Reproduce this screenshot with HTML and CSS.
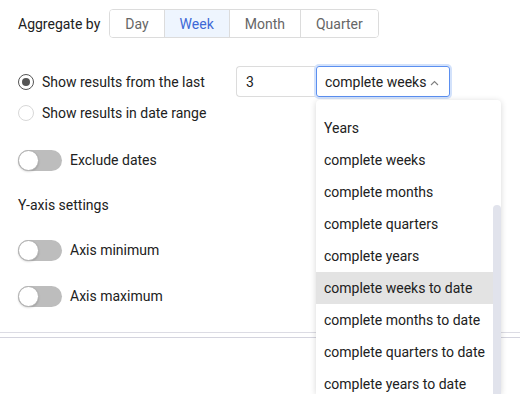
FILE: index.html
```html
<!DOCTYPE html>
<html>
<head>
<meta charset="utf-8">
<link rel="stylesheet" href="styles.css">
</head>
<body>
<div class="content">
  <div class="agg-row">
    <span class="agg-label">Aggregate by</span>
    <div class="btn-group">
      <button class="seg">Day</button>
      <button class="seg active">Week</button>
      <button class="seg">Month</button>
      <button class="seg">Quarter</button>
    </div>
  </div>

  <div class="radio-row first">
    <label class="radio-label">
      <span class="radio checked"></span>
      <span>Show results from the last</span>
    </label>
    <div class="num-input">3</div>
    <div class="select">
      <span>complete weeks</span>
      <svg class="chev" width="9" height="6" viewBox="0 0 9 6"><path d="M1 5 L4.5 1.5 L8 5" fill="none" stroke="#808080" stroke-width="1.1"/></svg>
    </div>
  </div>

  <div class="radio-row second">
    <label class="radio-label">
      <span class="radio"></span>
      <span>Show results in date range</span>
    </label>
  </div>

  <div class="toggle-row t1">
    <span class="toggle"><span class="knob"></span></span>
    <span>Exclude dates</span>
  </div>

  <div class="section-title">Y-axis settings</div>

  <div class="toggle-row t2">
    <span class="toggle"><span class="knob"></span></span>
    <span>Axis minimum</span>
  </div>

  <div class="toggle-row t2">
    <span class="toggle"><span class="knob"></span></span>
    <span>Axis maximum</span>
  </div>
</div>
<div class="footer-lines"></div>

<div class="dropdown">
  <ul class="options">
    <li>Years</li>
    <li>complete weeks</li>
    <li>complete months</li>
    <li>complete quarters</li>
    <li>complete years</li>
    <li class="hover">complete weeks to date</li>
    <li>complete months to date</li>
    <li>complete quarters to date</li>
    <li>complete years to date</li>
  </ul>
  <div class="scrollbar"></div>
</div>
</body>
</html>
```

FILE: styles.css
```css
html, body {
  margin: 0;
  padding: 0;
  background: #ffffff;
  width: 520px;
  height: 394px;
  overflow: hidden;
}
body {
  font-family: Roboto, "Liberation Sans", sans-serif;
  font-size: 14px;
  color: #212121;
  position: relative;
}
.content {
  padding: 9px 0 0 18px;
}
.agg-row {
  display: flex;
  align-items: center;
  height: 29px;
}
.agg-label {
  margin-right: 9px;
}
.btn-group {
  display: flex;
  height: 29px;
  border: 1px solid #dcdcdc;
  border-radius: 4px;
  box-sizing: border-box;
  overflow: hidden;
}
.seg {
  font-family: inherit;
  font-size: 14px;
  color: #666666;
  background: #ffffff;
  border: none;
  border-left: 1px solid #dcdcdc;
  padding: 0 15px;
  margin: 0;
  height: 100%;
}
.seg:first-child {
  border-left: none;
}
.seg.active {
  background: #eef5fe;
  color: #3d68d6;
}
.radio-row {
  display: flex;
  align-items: center;
}
.radio-row.first {
  margin-top: 28px;
  height: 31px;
}
.radio-row.second {
  margin-top: 5px;
  height: 22px;
}
.radio-label {
  display: flex;
  align-items: center;
  width: 218px;
}
.radio {
  width: 16px;
  height: 16px;
  border-radius: 50%;
  box-sizing: border-box;
  border: 1px solid #d8d8d8;
  margin-right: 8px;
  display: flex;
  align-items: center;
  justify-content: center;
}
.radio.checked {
  border: 1.5px solid #555555;
}
.radio.checked::after {
  content: "";
  width: 8px;
  height: 8px;
  border-radius: 50%;
  background: #555555;
}
.num-input {
  width: 80px;
  height: 31px;
  box-sizing: border-box;
  border: 1px solid #dcdcdc;
  border-right: none;
  border-radius: 4px 0 0 4px;
  padding-left: 9px;
  display: flex;
  align-items: center;
}
.select {
  width: 134px;
  height: 31px;
  box-sizing: border-box;
  border: 1px solid #5b8ff0;
  border-radius: 3px;
  box-shadow: 0 0 0 2px #d3e2fb;
  padding-left: 8px;
  display: flex;
  align-items: center;
}
.chev {
  margin-left: 4px;
  margin-top: 2px;
}
.toggle-row {
  display: flex;
  align-items: center;
  height: 22px;
}
.toggle-row.t1 {
  margin-top: 25px;
}
.toggle-row.t2 {
  margin-top: 24px;
}
.toggle {
  position: relative;
  width: 44px;
  height: 21px;
  border-radius: 11px;
  background: #bdbdbd;
  margin-right: 8px;
}
.knob {
  position: absolute;
  left: 0;
  top: 0;
  width: 21px;
  height: 21px;
  box-sizing: border-box;
  border-radius: 50%;
  background: #ffffff;
  border: 1px solid #b0b0b0;
  box-shadow: 0 1px 2px rgba(0,0,0,0.15);
}
.section-title {
  margin-top: 24px;
  height: 20px;
  line-height: 20px;
}
.footer-lines {
  margin-top: 25px;
  height: 4px;
  border-top: 1px solid #dcdce4;
  border-bottom: 1px solid #d4d4de;
}
.dropdown {
  position: absolute;
  left: 316px;
  top: 100px;
  width: 185px;
  height: 294px;
  overflow: hidden;
  background: #ffffff;
  border-radius: 4px 4px 0 0;
  box-shadow: 0 1px 6px rgba(0,0,0,0.16);
}
.options {
  list-style: none;
  margin: 0;
  padding: 12px 8px 0 0;
}
.options li {
  height: 32px;
  line-height: 32px;
  padding-left: 8px;
  white-space: nowrap;
}
.options li.hover {
  background: #e3e3e3;
}
.scrollbar {
  position: absolute;
  right: 0;
  top: 105px;
  bottom: -10px;
  width: 8px;
  border-radius: 4px;
  background: #e1e3ec;
}
```
